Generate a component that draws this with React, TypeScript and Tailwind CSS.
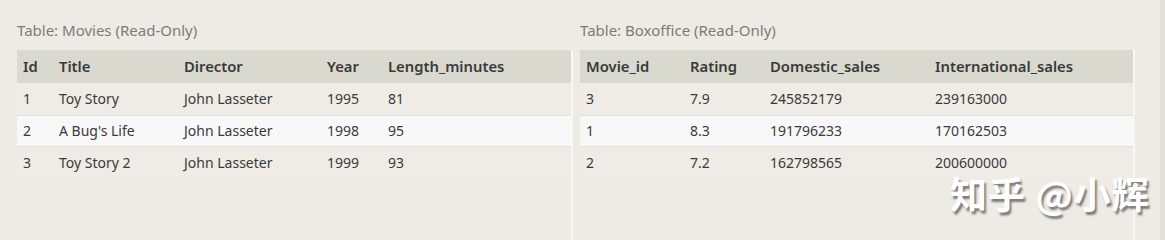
import React from 'react';

type Col = { key: string; label: string; w: string };

const movieCols: Col[] = [
  { key: 'id', label: 'Id', w: 'w-[36px]' },
  { key: 'title', label: 'Title', w: 'w-[125px]' },
  { key: 'director', label: 'Director', w: 'w-[143px]' },
  { key: 'year', label: 'Year', w: 'w-[61px]' },
  { key: 'length', label: 'Length_minutes', w: 'flex-1' },
];

const movies = [
  { id: '1', title: 'Toy Story', director: 'John Lasseter', year: '1995', length: '81' },
  { id: '2', title: "A Bug's Life", director: 'John Lasseter', year: '1998', length: '95' },
  { id: '3', title: 'Toy Story 2', director: 'John Lasseter', year: '1999', length: '93' },
];

const boxCols: Col[] = [
  { key: 'movie_id', label: 'Movie_id', w: 'w-[104px]' },
  { key: 'rating', label: 'Rating', w: 'w-[80px]' },
  { key: 'domestic', label: 'Domestic_sales', w: 'w-[165px]' },
  { key: 'intl', label: 'International_sales', w: 'flex-1' },
];

const boxoffice = [
  { movie_id: '3', rating: '7.9', domestic: '245852179', intl: '239163000' },
  { movie_id: '1', rating: '8.3', domestic: '191796233', intl: '170162503' },
  { movie_id: '2', rating: '7.2', domestic: '162798565', intl: '200600000' },
];

function DataTable({ title, cols, rows, width }: { title: string; cols: Col[]; rows: Record<string, string>[]; width: string }) {
  return (
    <div className={`${width} flex flex-col`}>
      <div className="h-[50px] pt-[19px] text-[15px] leading-[22px] text-[#7b7b7b]">{title}</div>
      <div className="flex-1 flex flex-col border-r-2 border-[#f8f7f3]">
        <div className="flex h-[33px] items-center bg-[#d9d9cf] font-semibold text-[14.8px] text-[#3a3a3a]">
          {cols.map((c) => (
            <div key={c.key} className={`${c.w} pl-[6px]`}>{c.label}</div>
          ))}
        </div>
        {rows.map((r, i) => (
          <div
            key={i}
            className={`flex h-[32px] items-center text-[14px] leading-[18px] text-[#3a3a3a] ${i === 1 ? 'bg-[#f8f8f8] border-y border-[#dfdfdc]' : 'bg-[#efece6]'}`}
          >
            {cols.map((c) => (
              <div key={c.key} className={`${c.w} pl-[6px]`}>{r[c.key]}</div>
            ))}
          </div>
        ))}
      </div>
    </div>
  );
}

export default function App() {
  return (
    <div className="relative h-[240px] w-[1165px] overflow-hidden bg-[#eeebe5] font-['Noto_Sans','Open_Sans',sans-serif]">
      <div className="flex h-full pl-[17px] gap-[7px]">
        <DataTable title="Table: Movies (Read-Only)" cols={movieCols} rows={movies} width="w-[556px]" />
        <DataTable title="Table: Boxoffice (Read-Only)" cols={boxCols} rows={boxoffice} width="w-[555px]" />
        <div className="flex-1" />
        <div className="w-[5px] bg-[#e2dfda]" />
      </div>
      <div className="absolute left-[950px] top-[175px] text-[37px] leading-[36px] font-bold text-white tracking-[1px] [text-shadow:2px_3px_2px_rgba(90,90,90,0.75)] font-['Noto_Sans_CJK_SC',sans-serif]">
        知乎 @小辉
      </div>
    </div>
  );
}
